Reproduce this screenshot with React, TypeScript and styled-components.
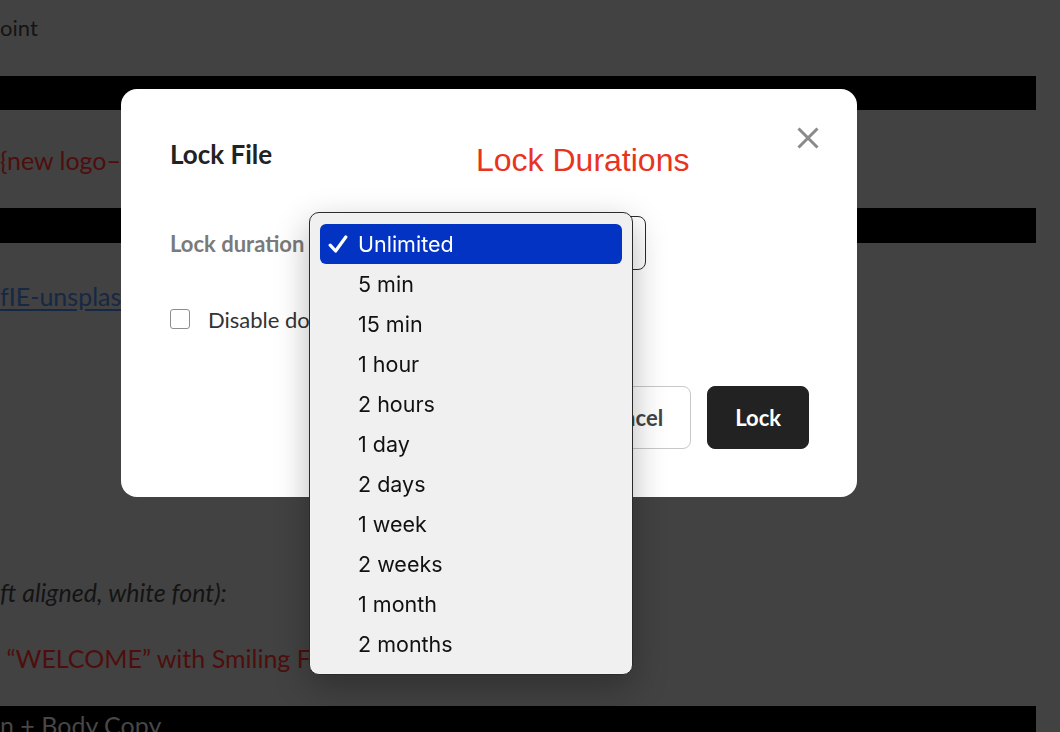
import React from "react";
import styled, { createGlobalStyle } from "styled-components";

const Global = createGlobalStyle`
  html, body { margin: 0; padding: 0; background: #424242; }
  body { width: 1060px; height: 732px; overflow: hidden; font-family: Lato, "Open Sans", sans-serif; }
`;

const Doc = styled.div`
  display: flex;
  flex-direction: column;
  padding-top: 8px;
  width: 1060px;
`;

const Line = styled.div<{ $gap?: number; $tone?: "dark" | "red" | "link"; $size?: number }>`
  height: 40px;
  line-height: 40px;
  margin-top: ${(p) => p.$gap ?? 0}px;
  font-family: Lato, "Open Sans", sans-serif;
  font-size: ${(p) => p.$size ?? 25}px;
  white-space: nowrap;
  color: ${(p) => (p.$tone === "red" ? "#4e0e0e" : p.$tone === "link" ? "#172844" : "#141414")};
  text-decoration: ${(p) => (p.$tone === "link" ? "underline" : "none")};
  text-underline-offset: 3px;
`;

const Italic = styled.em`
  font-style: italic;
`;

const Bar = styled.div<{ $gap: number; $h: number }>`
  margin-top: ${(p) => p.$gap}px;
  height: ${(p) => p.$h}px;
  width: 1036px;
  background: #000;
  color: #474747;
  font-family: Lato, "Open Sans", sans-serif;
  font-size: 25px;
  line-height: 38px;
  white-space: nowrap;
  overflow: hidden;
`;

const Overlay = styled.div`
  position: fixed;
  inset: 0;
  padding: 89px 0 0 121px;
  box-sizing: border-box;
`;

const Modal = styled.div`
  position: relative;
  width: 736px;
  height: 408px;
  box-sizing: border-box;
  background: #fff;
  border-radius: 16px;
  padding: 38px 38px 48px 49px;
  display: flex;
  flex-direction: column;
`;

const Header = styled.div`
  display: grid;
  grid-template-columns: 306px 1fr auto;
  align-items: start;
`;

const Title = styled.h2`
  margin: 11px 0 0;
  font-family: Lato, sans-serif;
  font-weight: 700;
  font-size: 26px;
  line-height: 32px;
  color: #222;
`;

const Annotation = styled.div`
  margin-top: 14px;
  font-family: "Liberation Sans", Arial, sans-serif;
  font-size: 32px;
  line-height: 38px;
  color: #e8341e;
`;

const CloseBtn = styled.button`
  width: 22px;
  height: 22px;
  padding: 0;
  border: 0;
  background: none;
  display: block;
`;

const FieldRow = styled.div`
  margin-top: 37px;
  display: grid;
  grid-template-columns: 160px 316px;
  align-items: center;
`;

const Label = styled.label`
  font-family: Lato, sans-serif;
  font-weight: 700;
  font-size: 22px;
  color: #7a7a7a;
  white-space: nowrap;
`;

const SelectBox = styled.div`
  height: 54px;
  box-sizing: border-box;
  border: 1px solid #2b2b2b;
  border-radius: 8px;
  background: #fff;
`;

const CheckRow = styled.label`
  margin-top: 34px;
  height: 30px;
  display: flex;
  align-items: center;
  gap: 18px;
  font-family: Lato, sans-serif;
  font-size: 22px;
  color: #333;
`;

const Box = styled.span`
  width: 20px;
  height: 20px;
  box-sizing: border-box;
  border: 1px solid #8e8e8e;
  border-radius: 3px;
  background: #fff;
`;

const Actions = styled.div`
  margin-top: 52px;
  margin-right: 10px;
  display: flex;
  justify-content: flex-end;
  gap: 16px;
`;

const Button = styled.button<{ $primary?: boolean }>`
  height: 63px;
  padding: 0 27px;
  border-radius: 8px;
  font-family: Lato, sans-serif;
  font-weight: 700;
  font-size: 22px;
  border: 1px solid ${(p) => (p.$primary ? "#222" : "#c8c8c8")};
  background: ${(p) => (p.$primary ? "#222" : "#fff")};
  color: ${(p) => (p.$primary ? "#fff" : "#444")};
`;

const Menu = styled.ul`
  position: absolute;
  left: 188px;
  top: 123px;
  width: 324px;
  box-sizing: border-box;
  margin: 0;
  padding: 11px 10px 10px;
  list-style: none;
  background: #f0f0f0;
  border: 1px solid #2a2a2a;
  border-radius: 10px;
  box-shadow: 0 12px 34px rgba(0, 0, 0, 0.28), 0 0 0 0.5px rgba(255, 255, 255, 0.4) inset;
`;

const Item = styled.li<{ $active?: boolean }>`
  height: 40px;
  display: flex;
  align-items: center;
  padding-left: 8px;
  gap: 10px;
  border-radius: 6px;
  font-family: Inter, "Liberation Sans", sans-serif;
  font-size: 21.5px;
  color: ${(p) => (p.$active ? "#fff" : "#111")};
  background: ${(p) => (p.$active ? "#0333c3" : "transparent")};
`;

const CheckSlot = styled.span`
  width: 20px;
  height: 18px;
  display: flex;
`;

const durations = [
  "Unlimited",
  "5 min",
  "15 min",
  "1 hour",
  "2 hours",
  "1 day",
  "2 days",
  "1 week",
  "2 weeks",
  "1 month",
  "2 months",
];

export default function App() {
  return (
    <>
      <Global />
      <Doc>
        <Line $size={22}>oint</Line>
        <Bar $gap={28} $h={34} />
        <Line $gap={30} $tone="red">{"{new logo\u2013hands}"}</Line>
        <Bar $gap={28} $h={35} />
        <Line $gap={33} $tone="link">fIE-unsplash.jpg</Line>
        <Line $gap={256}>
          <Italic>ft aligned, white font):</Italic>
        </Line>
        <Line $gap={26} $tone="red">
          &nbsp;{"\u201CWELCOME\u201D with Smiling Face"}
        </Line>
        <Bar $gap={28} $h={40}>n + Body Copy</Bar>
      </Doc>
      <Overlay>
        <Modal>
          <Header>
            <Title>Lock File</Title>
            <Annotation>Lock Durations</Annotation>
            <CloseBtn aria-label="Close">
              <svg width="22" height="22" viewBox="0 0 22 22">
                <path d="M1.5 1.5 L20.5 20.5 M20.5 1.5 L1.5 20.5" stroke="#8a8a8a" strokeWidth="3" strokeLinecap="butt" />
              </svg>
            </CloseBtn>
          </Header>
          <FieldRow>
            <Label>Lock duration</Label>
            <SelectBox />
          </FieldRow>
          <CheckRow>
            <Box />
            Disable download while locked
          </CheckRow>
          <Actions>
            <Button>Cancel</Button>
            <Button $primary>Lock</Button>
          </Actions>
          <Menu>
            {durations.map((d, i) => (
              <Item key={d} $active={i === 0}>
                <CheckSlot>
                  {i === 0 && (
                    <svg width="20" height="18" viewBox="0 0 20 18">
                      <path d="M2.2 10.2 L7.6 16 L17.8 2" fill="none" stroke="#fff" strokeWidth="3.2" strokeLinecap="round" strokeLinejoin="round" />
                    </svg>
                  )}
                </CheckSlot>
                {d}
              </Item>
            ))}
          </Menu>
        </Modal>
      </Overlay>
    </>
  );
}
